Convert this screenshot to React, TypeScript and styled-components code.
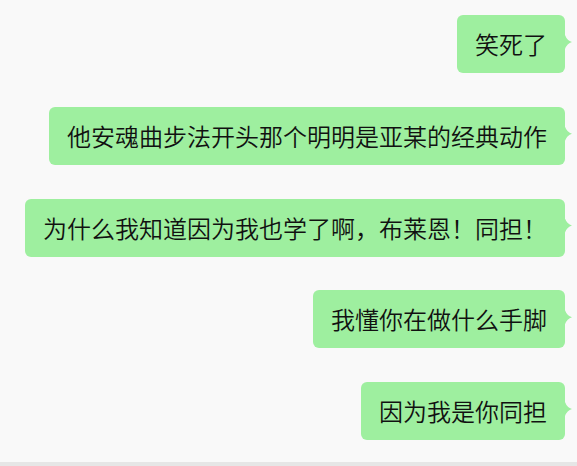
import { FC } from "react"
import styled, { createGlobalStyle } from "styled-components"

const messages = [
  "笑死了",
  "他安魂曲步法开头那个明明是亚某的经典动作",
  "为什么我知道因为我也学了啊，布莱恩！同担！",
  "我懂你在做什么手脚",
  "因为我是你同担",
]

const GlobalStyle = createGlobalStyle`
  html, body {
    margin: 0;
    padding: 0;
    background: #f9f9f9;
  }
  body {
    font-family: "Noto Sans CJK SC", "Noto Sans", sans-serif;
  }
`

const App: FC = () => {
  return (
    <>
      <GlobalStyle />
      <ChatLayout>
        <MessageList>
          {messages.map((text, i) => (
            <Bubble key={i}>{text}</Bubble>
          ))}
        </MessageList>
        <BottomBar />
      </ChatLayout>
    </>
  )
}

const ChatLayout = styled.div`
  display: flex;
  flex-direction: column;
  width: 577px;
  height: 466px;
  background: #f9f9f9;
`

const MessageList = styled.div`
  flex: 1;
  display: flex;
  flex-direction: column;
  align-items: flex-end;
  gap: 33.75px;
  padding: 15px 12px 0 0;
`

const Bubble = styled.div`
  position: relative;
  padding: 12px 18px;
  border-radius: 6px;
  background: #9eef9f;
  color: #111;
  font-size: 24px;
  font-weight: 350;
  line-height: 34px;
  white-space: nowrap;

  &::after {
    content: "";
    position: absolute;
    top: 20px;
    right: -7px;
    width: 7px;
    height: 14px;
    background: #9eef9f;
    clip-path: path("M0 0 Q2 5.5 7 7 Q2 8.5 0 14 Z");
  }
`

const BottomBar = styled.div`
  height: 4px;
  background: #e6e6e6;
`

export default App
